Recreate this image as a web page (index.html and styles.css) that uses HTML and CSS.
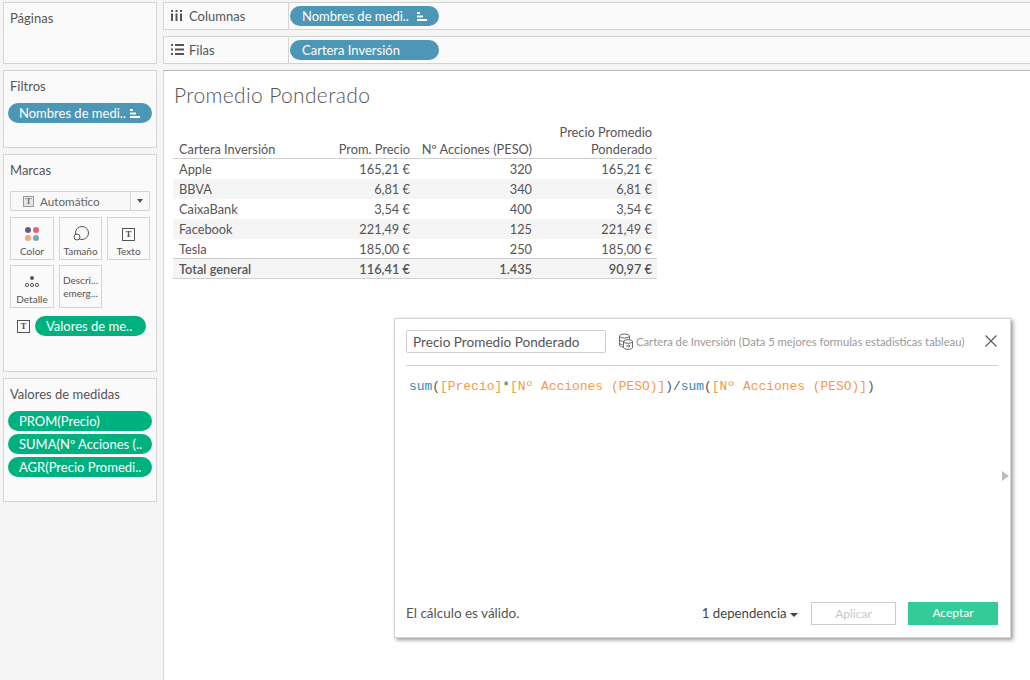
FILE: index.html
```html
<!DOCTYPE html>
<html lang="es">

<head>
    <meta charset="UTF-8">
    <title>Promedio Ponderado</title>
    <link rel="stylesheet" href="styles.css">
</head>

<body>
    <div class="sidebar">
        <div class="card card-pages">
            <div class="card-title">Páginas</div>
        </div>
        <div class="card card-filters">
            <div class="card-title">Filtros</div>
            <div class="pill pill-blue">
                <span class="pill-text">Nombres de medi..</span>
                <svg class="sort-icon" width="10" height="9" viewBox="0 0 10 9"><path d="M0 0h3v2H0zM0 3.500h6v2H0zM0 7h10v2H0z" fill="#fff"/></svg>
            </div>
        </div>
        <div class="card card-marks">
            <div class="card-title">Marcas</div>
            <div class="mark-select">
                <div class="mark-select-label">
                    <span class="t-icon t-icon-grey">T</span>
                    <span>Automático</span>
                </div>
                <div class="mark-select-arrow"></div>
            </div>
            <div class="mark-grid">
                <div class="mark-btn">
                    <svg width="14" height="14" viewBox="0 0 14 14">
                        <circle cx="3" cy="3" r="3" fill="#6b5a86"/>
                        <circle cx="11" cy="3" r="3" fill="#e8636a"/>
                        <circle cx="3" cy="11" r="3" fill="#f2a878"/>
                        <circle cx="11" cy="11" r="3" fill="#7da3cc"/>
                    </svg>
                    <span class="mark-label">Color</span>
                </div>
                <div class="mark-btn">
                    <svg width="16" height="15" viewBox="0 0 16 15" fill="none" stroke="#555">
                        <circle cx="9" cy="7" r="6.500"/>
                        <circle cx="4" cy="11" r="3" fill="#fafafa"/>
                    </svg>
                    <span class="mark-label">Tamaño</span>
                </div>
                <div class="mark-btn">
                    <span class="t-icon">T</span>
                    <span class="mark-label">Texto</span>
                </div>
                <div class="mark-btn">
                    <svg width="14" height="14" viewBox="0 0 14 14" fill="none" stroke="#555">
                        <circle cx="7" cy="3" r="2" fill="#555" stroke="none"/>
                        <circle cx="2" cy="10" r="1.600"/>
                        <circle cx="7" cy="10" r="1.600"/>
                        <circle cx="12" cy="10" r="1.600"/>
                    </svg>
                    <span class="mark-label">Detalle</span>
                </div>
                <div class="mark-btn mark-btn-text">
                    <span>Descri...</span>
                    <span>emerg...</span>
                </div>
            </div>
            <div class="mark-row">
                <span class="t-icon">T</span>
                <div class="pill pill-green pill-short">Valores de me..</div>
            </div>
        </div>
        <div class="card card-values">
            <div class="card-title">Valores de medidas</div>
            <div class="pill-stack">
                <div class="pill pill-green">PROM(Precio)</div>
                <div class="pill pill-green">SUMA(Nº Acciones (..</div>
                <div class="pill pill-green">AGR(Precio Promedi..</div>
            </div>
        </div>
    </div>

    <div class="main">
        <div class="shelf">
            <div class="shelf-head">
                <svg width="13" height="11" viewBox="0 0 13 11" fill="#555"><path d="M0 0h2v2H0zM4.500 0h2v2h-2zM9 0h2v2H9zM0 3.500h2V11H0zM4.500 3.500h2V11h-2zM9 3.500h2V11H9z"/></svg>
                <span>Columnas</span>
            </div>
            <div class="pill pill-blue pill-shelf">
                <span class="pill-text">Nombres de medi..</span>
                <svg class="sort-icon" width="10" height="9" viewBox="0 0 10 9"><path d="M0 0h3v2H0zM0 3.500h6v2H0zM0 7h10v2H0z" fill="#fff"/></svg>
            </div>
        </div>
        <div class="shelf">
            <div class="shelf-head">
                <svg width="13" height="11" viewBox="0 0 13 11" fill="#555"><path d="M0 0h2v2H0zM4 0h9v2H4zM0 4.500h2v2H0zM4 4.500h9v2H4zM0 9h2v2H0zM4 9h9v2H4z"/></svg>
                <span>Filas</span>
            </div>
            <div class="pill pill-blue pill-shelf">Cartera Inversión</div>
        </div>

        <div class="sheet">
            <h1>Promedio Ponderado</h1>
            <table class="data">
                <thead>
                    <tr>
                        <th class="col-name">Cartera Inversión</th>
                        <th class="col-a">Prom. Precio</th>
                        <th class="col-b">Nº Acciones (PESO)</th>
                        <th class="col-c">Precio Promedio<br>Ponderado</th>
                    </tr>
                </thead>
                <tbody>
                    <tr><td>Apple</td><td>165,21 €</td><td>320</td><td>165,21 €</td></tr>
                    <tr><td>BBVA</td><td>6,81 €</td><td>340</td><td>6,81 €</td></tr>
                    <tr><td>CaixaBank</td><td>3,54 €</td><td>400</td><td>3,54 €</td></tr>
                    <tr><td>Facebook</td><td>221,49 €</td><td>125</td><td>221,49 €</td></tr>
                    <tr class="last"><td>Tesla</td><td>185,00 €</td><td>250</td><td>185,00 €</td></tr>
                    <tr class="total"><td>Total general</td><td>116,41 €</td><td>1.435</td><td>90,97 €</td></tr>
                </tbody>
            </table>
        </div>
    </div>

    <div class="calc">
        <div class="calc-head">
            <div class="calc-name">Precio Promedio Ponderado</div>
            <svg class="calc-db" width="16" height="17" viewBox="0 0 16 17" fill="none" stroke="#666">
                <ellipse cx="6.500" cy="3" rx="5" ry="2"/>
                <path d="M1.500 3v9c0 1 1.500 1.800 3.500 2M11.500 3v3M1.500 6.500c0 1 2 2 5 2M1.500 10c0 .8 1 1.400 3 1.700"/>
                <ellipse cx="10" cy="8.500" rx="4.500" ry="1.800"/>
                <path d="M5.500 8.500v6c0 1 2 1.800 4.500 1.800s4.500-.8 4.500-1.800v-6"/>
                <path d="M8 13h4M10.500 11.500l1.500 1.500-1.500 1.500"/>
            </svg>
            <div class="calc-source">Cartera de Inversión (Data 5 mejores formulas estadisticas tableau)</div>
            <svg class="calc-close" width="12" height="12" viewBox="0 0 12 12" stroke="#555" stroke-width="1.100"><path d="M.5.500l11 11M11.500.500l-11 11"/></svg>
        </div>
        <div class="calc-body">
            <code class="formula"><span class="fn">sum</span>(<span class="fld">[Precio]</span>*<span class="fld">[Nº Acciones (PESO)]</span>)/<span class="fn">sum</span>(<span class="fld">[Nº Acciones (PESO)]</span>)</code>
            <div class="calc-handle"></div>
        </div>
        <div class="calc-foot">
            <span class="calc-status">El cálculo es válido.</span>
            <span class="calc-deps">1 dependencia <i class="deps-arrow"></i></span>
            <div class="btn btn-off">Aplicar</div>
            <div class="btn btn-ok">Aceptar</div>
        </div>
    </div>
</body>

</html>
```

FILE: styles.css
```css
html,
body {
    margin: 0;
    padding: 0;
    height: 100%;
    overflow: hidden;
}

body {
    display: flex;
    width: 1030px;
    height: 680px;
    background: #f5f5f5;
    color: #555;
    font-family: "Lato", "Liberation Sans", sans-serif;
    font-size: 13px;
}

/* columna izquierda */
.sidebar {
    width: 163px;
    flex: none;
    box-sizing: border-box;
    padding: 2px 6px 0 3px;
    display: flex;
    flex-direction: column;
    gap: 6px;
}

.card {
    box-sizing: border-box;
    background: #fafafa;
    border: 1px solid #d4d4d4;
    padding: 7px 4px 0 4px;
}

.card-pages { height: 62px; }
.card-filters { height: 78px; }
.card-marks { height: 218px; }
.card-values { height: 124px; }

.card-title {
    height: 16px;
    line-height: 16px;
    padding-left: 2px;
    font-size: 13px;
}

.pill {
    box-sizing: border-box;
    height: 20px;
    line-height: 20px;
    border-radius: 10px;
    padding: 0 11px;
    color: #fff;
    font-size: 13px;
    white-space: nowrap;
    display: flex;
    align-items: center;
}

.pill-blue { background: #4b97b5; }
.pill-green { background: #00b180; }
.pill-text { flex: 1; }
.sort-icon { margin-right: 1px; }

.card-filters .pill {
    margin-top: 9px;
}

.mark-select {
    margin: 13px 2px 0 2px;
    height: 20px;
    box-sizing: border-box;
    border: 1px solid #d4d4d4;
    border-radius: 2px;
    display: flex;
    background: #f8f8f8;
}

.mark-select-label {
    flex: 1;
    display: flex;
    align-items: center;
    gap: 6px;
    padding-left: 12px;
    color: #666;
    font-size: 11.700px;
}

.mark-select-arrow {
    width: 18px;
    border-left: 1px solid #d4d4d4;
    position: relative;
}

.mark-select-arrow::after {
    content: "";
    position: absolute;
    left: 6px;
    top: 7px;
    border: 3px solid transparent;
    border-top: 4px solid #555;
    border-bottom: 0;
}

.t-icon {
    box-sizing: border-box;
    width: 13px;
    height: 13px;
    border: 1px solid #555;
    color: #555;
    font-family: "Liberation Serif", serif;
    font-size: 9px;
    font-weight: bold;
    line-height: 11px;
    text-align: center;
    display: inline-block;
}

.t-icon-grey {
    width: 11px;
    height: 11px;
    border-color: #999;
    background: #e6e6e6;
    color: #777;
    line-height: 9px;
}

.mark-grid {
    margin: 6px 2px 0 2px;
    display: grid;
    grid-template-columns: 44px 43px 43px;
    grid-auto-rows: 43px;
    column-gap: 5px;
    row-gap: 5px;
}

.mark-btn {
    box-sizing: border-box;
    border: 1px solid #d4d4d4;
    display: flex;
    flex-direction: column;
    align-items: center;
    justify-content: flex-end;
    gap: 3px;
    padding-bottom: 1px;
    background: #fafafa;
}

.mark-label {
    font-size: 10px;
    line-height: 14px;
    white-space: nowrap;
}

.mark-btn-text {
    justify-content: center;
    gap: 0;
    padding: 0;
    font-size: 10px;
    line-height: 13px;
}

.mark-row {
    margin: 8px 0 0 9px;
    display: flex;
    align-items: center;
    gap: 5px;
}

.pill-short {
    width: 111px;
}

.pill-stack {
    margin-top: 9px;
    display: flex;
    flex-direction: column;
    gap: 3px;
}

/* parte derecha */
.main {
    flex: 1;
    min-width: 0;
    padding-top: 2px;
    display: flex;
    flex-direction: column;
    gap: 6px;
}

.shelf {
    height: 28px;
    box-sizing: border-box;
    background: #fafafa;
    border: 1px solid #d4d4d4;
    border-right: 0;
    display: flex;
    align-items: center;
}

.shelf-head {
    width: 125px;
    height: 100%;
    box-sizing: border-box;
    border-right: 1px solid #d4d4d4;
    padding: 0 0 1px 7px;
    display: flex;
    align-items: center;
    gap: 5px;
}

.pill-shelf {
    width: 149px;
    margin-left: 1px;
    padding-left: 12px;
}

.sheet {
    flex: 1;
    background: #fff;
    border-top: 1px solid #b8b8b8;
    border-left: 1px solid #d4d4d4;
    padding: 0 0 0 9px;
}

h1 {
    margin: 12px 0 0 1px;
    height: 24px;
    line-height: 24px;
    font-size: 21px;
    font-weight: 300;
    letter-spacing: .35px;
    color: #555;
}

.data {
    margin-top: 17px;
    width: 484px;
    border-collapse: separate;
    border-spacing: 0;
    table-layout: fixed;
    font-size: 12.800px;
    color: #555;
}

.data th {
    box-sizing: border-box;
    font-weight: normal;
    vertical-align: bottom;
    text-align: right;
    line-height: 17px;
    padding: 0 5px 0 0;
    border-bottom: 1px solid #cfcfcf;
    white-space: nowrap;
}

.data th.col-name {
    text-align: left;
    padding-left: 6px;
    padding-right: 0;
}

.col-name { width: 142px; }
.col-a { width: 100px; }
.col-b { width: 122px; }

.data td {
    height: 20px;
    padding: 0 5px 0 0;
    text-align: right;
    box-sizing: border-box;
}

.data td:first-child {
    text-align: left;
    padding-left: 6px;
}

.data tbody tr:nth-child(even) {
    background: #f5f5f5;
}

.data tr.last td {
    height: 19px;
}

.data tr.total {
    background: #f5f5f5;
    font-weight: 600;
}

.data tr.total td {
    height: 21px;
    border-top: 1px solid #cfcfcf;
    border-bottom: 1px solid #cfcfcf;
}

/* ventana de calculo */
.calc {
    position: absolute;
    left: 394px;
    top: 318px;
    width: 617px;
    height: 320px;
    box-sizing: border-box;
    background: #fff;
    border: 1px solid #d4d4d4;
    box-shadow: 2px 2px 4px rgba(0, 0, 0, .4);
    padding: 0 12px 0 11px;
    display: flex;
    flex-direction: column;
}

.calc-head {
    height: 47px;
    flex: none;
    box-sizing: border-box;
    border-bottom: 1px solid #d0d0d0;
    display: flex;
    align-items: center;
    padding-bottom: 2px;
}

.calc-name {
    width: 200px;
    height: 23px;
    line-height: 22px;
    box-sizing: border-box;
    border: 1px solid #cfcfcf;
    border-radius: 2px;
    padding-left: 6px;
    font-size: 13.600px;
}

.calc-db {
    margin-left: 12px;
}

.calc-source {
    flex: 1;
    margin-left: 2px;
    color: #999;
    font-size: 11.250px;
    white-space: nowrap;
}

.calc-close {
    margin-right: 1px;
}

.calc-body {
    flex: 1;
    padding: 11px 0 0 3px;
    position: relative;
}

.formula {
    font-family: "Liberation Mono", monospace;
    font-size: 12.950px;
    color: #555;
}

.fn { color: #3a87ad; }
.fld { color: #f39a4c; }

.calc-handle {
    position: absolute;
    right: -11px;
    top: 105px;
    border: 5px solid transparent;
    border-left: 7px solid #bdbdbd;
    border-right: 0;
}

.calc-foot {
    height: 35px;
    flex: none;
    display: flex;
    align-items: flex-start;
}

.calc-status {
    flex: 1;
    line-height: 23px;
    font-size: 13.500px;
}

.calc-deps {
    line-height: 23px;
    margin-right: 13px;
    color: #444;
    font-size: 13.200px;
}

.deps-arrow {
    display: inline-block;
    border: 4px solid transparent;
    border-top: 4px solid #444;
    border-bottom: 0;
    vertical-align: middle;
}

.btn {
    width: 85px;
    height: 23px;
    line-height: 22px;
    box-sizing: border-box;
    text-align: center;
    font-size: 12px;
}

.btn-off {
    border: 1px solid #ccc;
    color: #c8c8c8;
    margin-right: 12px;
}

.btn-ok {
    width: 90px;
    background: #33cc99;
    color: #fff;
}
```
